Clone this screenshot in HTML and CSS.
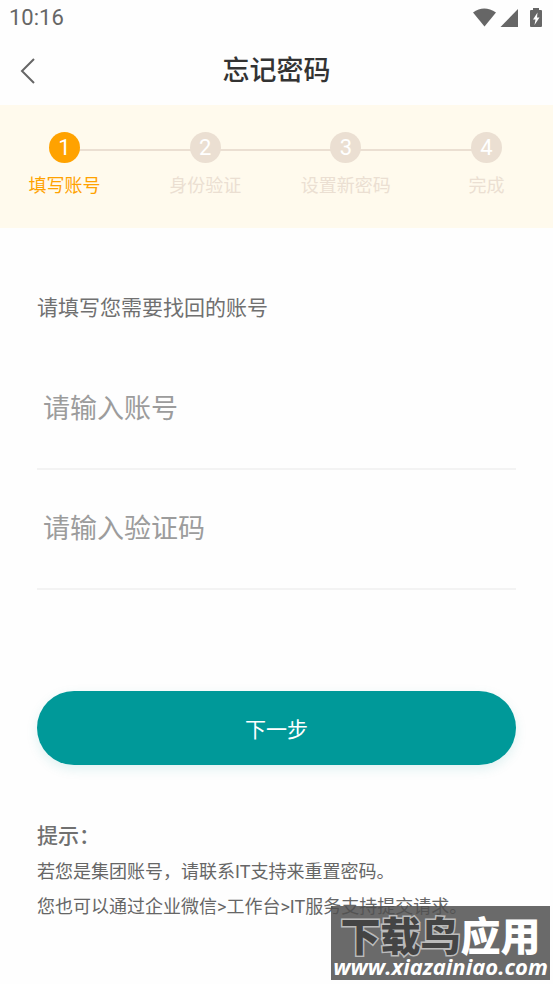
FILE: index.html
```html
<!DOCTYPE html>
<html lang="zh-CN">
<head>
<meta charset="utf-8">
<meta name="viewport" content="width=device-width, initial-scale=1">
<title>忘记密码</title>
<link rel="stylesheet" href="styles.css">
</head>
<body>
<div class="status-bar">
  <span class="clock">10:16</span>
  <svg class="status-icons" width="72" height="20" viewBox="0 0 72 20" aria-hidden="true">
    <path d="M1 4.500Q12-3.500 24 4.500L12.500 18.500Z"/>
    <path d="M46 1V19H28.500Z"/>
    <path fill-rule="evenodd" d="M61 0H67V2H69Q70 2 70 3V18Q70 19 69 19H59Q58 19 58 18V3Q58 2 59 2H61ZM65.500 4.500L61 11.500H63.500L62.500 17L67.500 9.500H65Z"/>
  </svg>
</div>
<header class="header">
  <button class="back" type="button" aria-label="返回">
    <svg width="16" height="26" viewBox="0 0 16 26" aria-hidden="true"><path d="M14 1L2 13L14 25"/></svg>
  </button>
  <h1 class="title">忘记密码</h1>
</header>
<ol class="steps">
  <li class="step active"><span class="number">1</span><span class="name">填写账号</span></li>
  <li class="step"><span class="number">2</span><span class="name">身份验证</span></li>
  <li class="step"><span class="number">3</span><span class="name">设置新密码</span></li>
  <li class="step"><span class="number">4</span><span class="name">完成</span></li>
</ol>
<main class="content">
  <form>
    <p class="intro">请填写您需要找回的账号</p>
    <input class="field" type="text" placeholder="请输入账号" aria-label="账号">
    <input class="field" type="text" placeholder="请输入验证码" aria-label="验证码">
    <button class="next" type="submit">下一步</button>
  </form>
  <section class="tips">
    <h2 class="tips-title">提示：</h2>
    <p>若您是集团账号，请联系IT支持来重置密码。</p>
    <p>您也可以通过企业微信&gt;工作台&gt;IT服务支持提交请求。</p>
  </section>
</main>
<aside class="watermark">
  <div class="brand"><span class="brand-dark">下载鸟</span><span>应用</span></div>
  <div class="site">www.xiazainiao.com</div>
</aside>
</body>
</html>
```
FILE: styles.css
```css
* {
  box-sizing: border-box;
}

body {
  margin: 0;
  background: #fefefe;
  color: #666;
  font-family: Roboto, "Noto Sans CJK SC", sans-serif;
}

h1, h2, p, ol {
  margin: 0;
  padding: 0;
}

.status-bar {
  display: flex;
  justify-content: space-between;
  align-items: center;
  height: 36px;
  padding: 0 9px 0 9px;
}

.clock {
  font-size: 22px;
  line-height: 38px;
}

.status-icons {
  fill: #666;
}

.header {
  display: grid;
  grid-template-columns: 56px 1fr 56px;
  align-items: center;
  height: 69px;
}

.back {
  display: flex;
  align-items: center;
  height: 56px;
  padding: 0 0 0 20px;
  border: 0;
  background: none;
}

.back path {
  fill: none;
  stroke: #666;
  stroke-width: 2;
}

.title {
  color: #333;
  font-size: 27px;
  font-weight: 500;
  line-height: 40px;
  text-align: center;
}

.steps {
  position: relative;
  display: flex;
  justify-content: space-between;
  padding: 27px 51px 27px 49px;
  background: #fffaed;
  list-style: none;
}

.steps::before {
  content: "";
  position: absolute;
  top: 44px;
  right: 60px;
  left: 60px;
  height: 2px;
  background: #ebdfd2;
}

.step {
  position: relative;
  display: flex;
  flex-direction: column;
  align-items: center;
  gap: 8px;
  width: 31px;
  color: #ebdfd2;
}

.number {
  width: 31px;
  height: 31px;
  border-radius: 50%;
  background: #ebdfd2;
  color: #fff;
  font-size: 22px;
  line-height: 32px;
  text-align: center;
}

.name {
  font-size: 18px;
  line-height: 30px;
  white-space: nowrap;
}

.active {
  color: #ffa200;
}

.active .number {
  background: #ffa200;
}

.content {
  padding: 64px 37px;
}

.intro {
  margin-bottom: 26px;
  color: #707070;
  font-size: 21px;
  line-height: 32px;
}

.field {
  display: block;
  width: 100%;
  height: 120px;
  padding: 0 6px;
  border: 0;
  border-bottom: 2px solid #f3f3f3;
  outline: 0;
  background: none;
  color: #333;
  font: inherit;
  font-size: 27px;
}

.field::placeholder {
  color: #9c9c9c;
}

.next {
  display: block;
  width: 100%;
  height: 74px;
  margin-top: 101px;
  border: 0;
  border-radius: 37px;
  background: #009999;
  box-shadow: 0 4px 12px #00999920;
  color: #fff;
  font: inherit;
  font-size: 21px;
}

.tips {
  margin-top: 54px;
  font-size: 18px;
  line-height: 35px;
}

.tips-title {
  color: #707070;
  font-size: 21px;
  font-weight: 500;
  line-height: 35px;
}

.watermark {
  position: absolute;
  right: 3px;
  bottom: 4px;
  width: 219px;
  height: 74px;
  padding-top: 12px;
  background: #505050d9;
  color: #fff;
  text-align: center;
  white-space: nowrap;
}

.brand {
  font-size: 40px;
  font-weight: 900;
  line-height: 40px;
}

.brand-dark {
  color: #444;
  paint-order: stroke fill;
  -webkit-text-stroke: 3px #bbb;
}

.site {
  font-family: "Open Sans", sans-serif;
  font-size: 22px;
  font-style: italic;
  font-weight: 700;
  line-height: 16px;
}
```
